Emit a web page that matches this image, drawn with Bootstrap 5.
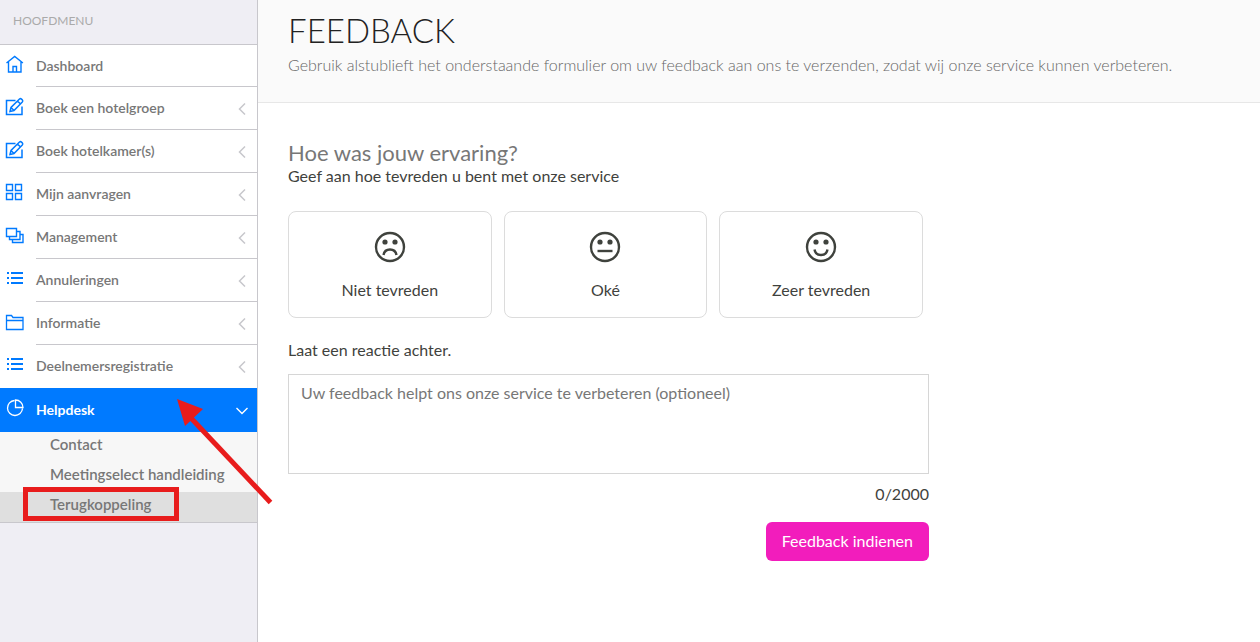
<!DOCTYPE html>
<html lang="nl">
<head>
<meta charset="utf-8">
<meta name="viewport" content="width=device-width, initial-scale=1">
<title>Feedback</title>
<link href="https://cdn.jsdelivr.net/npm/bootstrap@5.3.0/dist/css/bootstrap.min.css" rel="stylesheet">
<style>
  body { font-family: Lato, "Liberation Sans", sans-serif; font-size: 16px; line-height: 24px; color: #3f423d; background: #fff; }
  .side { width: 258px; background: #efeef4; border-right: 1px solid #c8c7cc; }
  .side-title { height: 45px; padding: 0 13px 2px; font-size: 12px; color: #aaa; border-bottom: 1px solid #c8c7cc; }
  .menu { background: #fff; }
  .menu-link { height: 43px; padding-left: 5px; font-size: 14px; font-weight: 600; color: #777; text-decoration: none; }
  .menu-link:first-child { height: 42px; }
  .menu-link .glyph { width: 20px; height: 20px; margin: 0 11px 4px 0; color: #007aff; }
  .menu-text { border-bottom: 1px solid #c8c7cc; padding-right: 10px; }
  .menu-text .chev { width: 10px; height: 14px; padding-top: 2px; color: #c7c7cc; }
  .menu-link.current { height: 44px; background: #007aff; color: #fff; font-weight: 700; }
  .menu-link.current .glyph, .menu-link.current .chev { color: #fff; }
  .menu-link.current .chev { width: 14px; height: 12px; margin-right: -2px; }
  .menu-link.current .menu-text, .last .menu-text { border-color: transparent; }
  .submenu { background: #f7f7f7; border-bottom: 1px solid #c8c7cc; }
  .sub-link { display: block; height: 30px; line-height: 24px; padding-left: 50px; font-size: 15px; font-weight: 600; color: #777; text-decoration: none; }
  .sub-link.chosen { background: #dfdfdf; }
  .frame { left: 23px; top: -5px; width: 156px; height: 34px; border: 5px solid #e81c1c; pointer-events: none; }
  .pointer { left: 176px; top: -93px; width: 98px; height: 108px; z-index: 2; pointer-events: none; }
  .page-head { background: #fafafa; border-bottom: 1px solid #e7e7e7; height: 103px; padding: 11px 30px 0; }
  .page-head h1 { font-size: 33px; line-height: 38px; font-weight: 300; color: #222; }
  .page-head p { line-height: 32px; font-size: 16px; color: #666; font-weight: 300; }
  .content { padding: 38px 30px; }
  .feedback { max-width: 641px; }
  .feedback h2 { font-size: 22px; line-height: 24px; color: #777; font-weight: 400; }
  .feedback .hint { line-height: 22px; }
  .choices { display: grid; grid-template-columns: repeat(3, 1fr); gap: 12px; margin: 24px 6px 20px 0; }
  .choice { height: 107px; padding: 18px 0 0; border: 1px solid #dcdcdc; border-radius: 8px; gap: 14px; font-size: 16px; color: #3f423d; }
  .choice svg { width: 34px; height: 34px; }
  .feedback textarea { height: 100px; padding: 6px 12px; border-radius: 0; border-color: #d6d6d6; font-size: 16px; line-height: 24px; resize: none; }
  .feedback textarea::placeholder { color: #777; }
  .send { height: 39px; padding: 0 16px 2px; border: 0; border-radius: 6px; background: #f21dbc; color: #fff; font-size: 16px; }
</style>
</head>
<body>
<svg class="d-none" xmlns="http://www.w3.org/2000/svg">
  <symbol id="home" viewBox="0 0 20 20"><path d="M1.500 9 9.700 2.500l8.200 6.500M3.500 7.500v10.500h12.500V7.500M8 18v-5.500h3.500V18" fill="none" stroke="currentColor" stroke-width="1.400"/></symbol>
  <symbol id="edit" viewBox="0 0 20 20"><path d="M10.500 3.500H1.500V17.500H17V9.500M5 14.500l1-4L14.500 2q1-.8 2 .1l.9.900q.8 1-.1 2L9 13.500zM6 10.500l3 3M12.500 4l3 3" fill="none" stroke="currentColor" stroke-width="1.500"/></symbol>
  <symbol id="grid" viewBox="0 0 20 20"><path d="M1.500 1.500h6v6h-6zM10.500 1.500h6v6h-6zM1.500 10.500h6v6h-6zM10.500 10.500h6v6h-6z" fill="none" stroke="currentColor" stroke-width="1.400"/></symbol>
  <symbol id="stack" viewBox="0 0 20 20"><path d="M1.500 2.500h10v8h-10zM4.500 10.500v3h10.500V5.500H11.500M7.500 13.500v3h10.500V8.500h-3" fill="none" stroke="currentColor" stroke-width="1.400"/></symbol>
  <symbol id="list" viewBox="0 0 20 20"><path d="M2 4h2M2 9h2M2 14h2M6 4h12M6 9h12M6 14h12" stroke="currentColor" stroke-width="2"/></symbol>
  <symbol id="folder" viewBox="0 0 20 20"><path d="M1.500 17.500v-14h5l1.500 2h10v12zM1.500 8.500h16.500" fill="none" stroke="currentColor" stroke-width="1.300"/></symbol>
  <symbol id="pie" viewBox="0 0 20 20"><path d="M9.500 2.500a7.500 7.500 0 1 0 8 8M10.500 2v7.500h7.500a7.500 7.500 0 0 0-7.500-7.500z" fill="none" stroke="currentColor" stroke-width="1.300"/></symbol>
  <symbol id="left" viewBox="0 0 10 12"><path d="M8 .5 2.500 6 8 11.500" fill="none" stroke="currentColor" stroke-width="1.500"/></symbol>
  <symbol id="down" viewBox="0 0 14 10"><path d="m1.500 2 5.500 5.500L12.500 2" fill="none" stroke="currentColor" stroke-width="1.400"/></symbol>
</svg>

<div class="d-flex min-vh-100">
  <nav class="side flex-shrink-0" aria-label="Hoofdmenu">
    <div class="side-title d-flex align-items-center">HOOFDMENU</div>
    <div class="menu">
      <a class="menu-link d-flex align-items-center" href="#"><svg class="glyph"><use href="#home"/></svg><span class="menu-text d-flex flex-fill h-100 align-items-center justify-content-between">Dashboard</span></a>
      <a class="menu-link d-flex align-items-center" href="#"><svg class="glyph"><use href="#edit"/></svg><span class="menu-text d-flex flex-fill h-100 align-items-center justify-content-between">Boek een hotelgroep<svg class="chev"><use href="#left"/></svg></span></a>
      <a class="menu-link d-flex align-items-center" href="#"><svg class="glyph"><use href="#edit"/></svg><span class="menu-text d-flex flex-fill h-100 align-items-center justify-content-between">Boek hotelkamer(s)<svg class="chev"><use href="#left"/></svg></span></a>
      <a class="menu-link d-flex align-items-center" href="#"><svg class="glyph"><use href="#grid"/></svg><span class="menu-text d-flex flex-fill h-100 align-items-center justify-content-between">Mijn aanvragen<svg class="chev"><use href="#left"/></svg></span></a>
      <a class="menu-link d-flex align-items-center" href="#"><svg class="glyph"><use href="#stack"/></svg><span class="menu-text d-flex flex-fill h-100 align-items-center justify-content-between">Management<svg class="chev"><use href="#left"/></svg></span></a>
      <a class="menu-link d-flex align-items-center" href="#"><svg class="glyph"><use href="#list"/></svg><span class="menu-text d-flex flex-fill h-100 align-items-center justify-content-between">Annuleringen<svg class="chev"><use href="#left"/></svg></span></a>
      <a class="menu-link d-flex align-items-center" href="#"><svg class="glyph"><use href="#folder"/></svg><span class="menu-text d-flex flex-fill h-100 align-items-center justify-content-between">Informatie<svg class="chev"><use href="#left"/></svg></span></a>
      <a class="menu-link last d-flex align-items-center" href="#"><svg class="glyph"><use href="#list"/></svg><span class="menu-text d-flex flex-fill h-100 align-items-center justify-content-between">Deelnemersregistratie<svg class="chev"><use href="#left"/></svg></span></a>
      <a class="menu-link current d-flex align-items-center" href="#"><svg class="glyph"><use href="#pie"/></svg><span class="menu-text d-flex flex-fill h-100 align-items-center justify-content-between">Helpdesk<svg class="chev"><use href="#down"/></svg></span></a>
    </div>
    <div class="submenu">
      <a class="sub-link" href="#">Contact</a>
      <a class="sub-link" href="#">Meetingselect handleiding</a>
      <div class="position-relative">
        <a class="sub-link chosen" href="#" aria-current="page">Terugkoppeling</a>
        <span class="frame position-absolute"></span>
        <svg class="pointer position-absolute" viewBox="0 0 98 108" aria-hidden="true"><path d="M14 18 94.500 103.500" stroke="#e81c1c" stroke-width="5"/><path d="M1 0 27 10 9 27z" fill="#e81c1c"/></svg>
      </div>
    </div>
  </nav>

  <main class="flex-fill">
    <header class="page-head">
      <h1 class="m-0">FEEDBACK</h1>
      <p class="m-0">Gebruik alstublieft het onderstaande formulier om uw feedback aan ons te verzenden, zodat wij onze service kunnen verbeteren.</p>
    </header>
    <div class="content">
      <form class="feedback">
        <h2 class="m-0">Hoe was jouw ervaring?</h2>
        <div class="hint" id="ask">Geef aan hoe tevreden u bent met onze service</div>
        <div class="choices" role="radiogroup" aria-labelledby="ask">
          <div>
            <input class="btn-check" type="radio" name="score" id="bad">
            <label class="choice btn w-100 d-flex flex-column align-items-center" for="bad"><svg viewBox="0 0 34 34"><circle cx="17" cy="17" r="14" fill="none" stroke="currentColor" stroke-width="2.400"/><circle cx="12" cy="12" r="2.600" fill="currentColor"/><circle cx="22" cy="12" r="2.600" fill="currentColor"/><path d="M10.500 25q1-5.500 6.500-5.500t6.500 5.500" fill="none" stroke="currentColor" stroke-width="2.400"/></svg>Niet tevreden</label>
          </div>
          <div>
            <input class="btn-check" type="radio" name="score" id="okay">
            <label class="choice btn w-100 d-flex flex-column align-items-center" for="okay"><svg viewBox="0 0 34 34"><circle cx="17" cy="17" r="14" fill="none" stroke="currentColor" stroke-width="2.400"/><circle cx="12" cy="12" r="2.600" fill="currentColor"/><circle cx="22" cy="12" r="2.600" fill="currentColor"/><path d="M9.500 21h15" stroke="currentColor" stroke-width="2.400"/></svg>Oké</label>
          </div>
          <div>
            <input class="btn-check" type="radio" name="score" id="good">
            <label class="choice btn w-100 d-flex flex-column align-items-center" for="good"><svg viewBox="0 0 34 34"><circle cx="17" cy="17" r="14" fill="none" stroke="currentColor" stroke-width="2.400"/><circle cx="12" cy="12" r="2.600" fill="currentColor"/><circle cx="22" cy="12" r="2.600" fill="currentColor"/><path d="M10.500 19.500q1 5.500 6.500 5.500t6.500-5.500" fill="none" stroke="currentColor" stroke-width="2.400"/></svg>Zeer tevreden</label>
          </div>
        </div>
        <label class="d-block mb-2 pb-1" for="comment">Laat een reactie achter.</label>
        <textarea class="form-control" id="comment" maxlength="2000" placeholder="Uw feedback helpt ons onze service te verbeteren (optioneel)"></textarea>
        <div class="text-end mt-2">0/2000</div>
        <div class="text-end mt-3"><button class="send btn" type="button">Feedback indienen</button></div>
      </form>
    </div>
  </main>
</div>
<script src="https://cdn.jsdelivr.net/npm/bootstrap@5.3.0/dist/js/bootstrap.bundle.min.js"></script>
</body>
</html>
